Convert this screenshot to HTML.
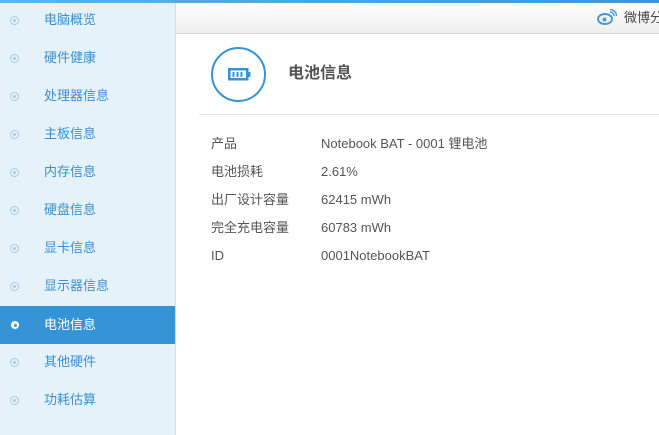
<!DOCTYPE html>
<html><head><meta charset="utf-8"><style>
*{margin:0;padding:0;box-sizing:border-box}
body{width:659px;height:435px;overflow:hidden;background:#fff;font-family:"Liberation Sans","Noto Sans CJK SC",sans-serif;position:relative}
.top{position:absolute;left:0;top:0;width:659px;height:3px;background:linear-gradient(90deg,#5cb5e8,#3b96d6)}
.side{position:absolute;left:0;top:3px;width:176px;height:432px;background:#e6f2f9;border-right:1px solid #c9dfee}
.item{position:absolute;left:0;width:175px;height:38px;line-height:38px;font-size:13px;color:#3a8fd0}
.item .d{position:absolute;left:10px;top:15px;width:9px;height:9px;border:1px solid #a9cbe6;border-radius:50%}
.item .d:after{content:"";position:absolute;left:2px;top:2px;width:3px;height:3px;border-radius:50%;background:#a9cbe6}
.item span{position:absolute;left:44px}
.item.a{background:#3494d6;color:#fff}
.item.a .d{border:none;background:#fff;width:8px;height:8px;left:11px}
.item.a .d:after{background:#3494d6;left:2.5px;top:2.5px}
.bar{position:absolute;left:176px;top:3px;width:483px;height:31px;background:linear-gradient(#fff,#eeeeee);border-bottom:1px solid #d6d6d6}
.wb{position:absolute;left:624px;top:9px;font-size:13px;color:#444;white-space:nowrap;line-height:18px}
.circ{position:absolute;left:211px;top:47px;width:55px;height:55px;border:2px solid #3494d6;border-radius:50%}
.title{position:absolute;left:288px;top:63px;font-size:16px;font-weight:bold;color:#555;line-height:22px}
.sep{position:absolute;left:199px;top:114px;width:460px;height:1px;background:#e2e2e2}
.r{position:absolute;font-size:13px;color:#555;line-height:18px;height:18px;white-space:nowrap}
</style></head><body>
<div class="top"></div>
<div class="side">
<div class="item" style="top:-2px"><i class="d"></i><span>电脑概览</span></div>
<div class="item" style="top:36px"><i class="d"></i><span>硬件健康</span></div>
<div class="item" style="top:74px"><i class="d"></i><span>处理器信息</span></div>
<div class="item" style="top:112px"><i class="d"></i><span>主板信息</span></div>
<div class="item" style="top:150px"><i class="d"></i><span>内存信息</span></div>
<div class="item" style="top:188px"><i class="d"></i><span>硬盘信息</span></div>
<div class="item" style="top:226px"><i class="d"></i><span>显卡信息</span></div>
<div class="item" style="top:264px"><i class="d"></i><span>显示器信息</span></div>
<div class="item a" style="top:303px"><i class="d"></i><span>电池信息</span></div>
<div class="item" style="top:340px"><i class="d"></i><span>其他硬件</span></div>
<div class="item" style="top:378px"><i class="d"></i><span>功耗估算</span></div>
</div>
<div class="bar"></div>
<svg style="position:absolute;left:597px;top:9px" width="20" height="16" viewBox="0 0 20 16"><ellipse cx="8" cy="10" rx="7" ry="5" fill="none" stroke="#4a9ad4" stroke-width="2"/><circle cx="7.5" cy="10.5" r="2" fill="#4a9ad4"/><path d="M13 3a4 4 0 0 1 4 4M13 0.5a6.5 6.5 0 0 1 6.5 6.5" fill="none" stroke="#4a9ad4" stroke-width="1.5"/></svg>
<div class="wb">微博分享</div>
<div class="circ"></div>
<svg style="position:absolute;left:228px;top:68px" width="24" height="13" viewBox="0 0 24 13"><rect x="1.25" y="1.25" width="18" height="10" fill="none" stroke="#3494d6" stroke-width="2.5"/><rect x="19.5" y="4" width="3" height="5" fill="#3494d6"/><rect x="4.5" y="4" width="2" height="5" fill="#3494d6"/><rect x="8.5" y="4" width="2" height="5" fill="#3494d6"/><rect x="12.5" y="4" width="2" height="5" fill="#3494d6"/></svg>
<div class="title">电池信息</div>
<div class="sep"></div>
<div class="r" style="left:211px;top:135px">产品</div><div class="r" style="left:321px;top:135px">Notebook BAT - 0001 锂电池</div>
<div class="r" style="left:211px;top:163px">电池损耗</div><div class="r" style="left:321px;top:163px">2.61%</div>
<div class="r" style="left:211px;top:191px">出厂设计容量</div><div class="r" style="left:321px;top:191px">62415 mWh</div>
<div class="r" style="left:211px;top:219px">完全充电容量</div><div class="r" style="left:321px;top:219px">60783 mWh</div>
<div class="r" style="left:211px;top:247px">ID</div><div class="r" style="left:321px;top:247px">0001NotebookBAT</div>
</body></html>
